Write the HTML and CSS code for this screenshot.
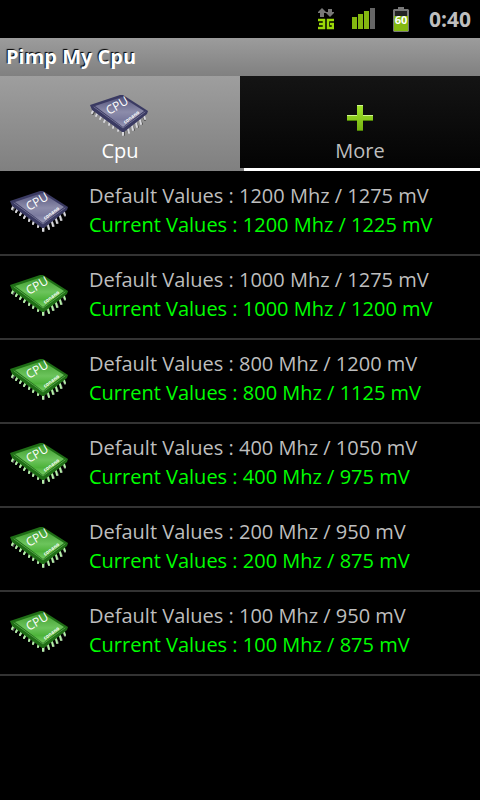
FILE: index.html
```html
<!DOCTYPE html>
<html lang="en">
<head>
<meta charset="utf-8">
<meta name="viewport" content="width=device-width, initial-scale=1">
<title>Pimp My Cpu</title>
<link rel="stylesheet" href="styles.css">
</head>
<body>
<svg class="defs" aria-hidden="true">
  <defs>
    <linearGradient id="face-violet" x1="0" y1="0" x2="0" y2="1"><stop offset="0" stop-color="#54547c"/><stop offset=".5" stop-color="#8c8caa"/><stop offset=".75" stop-color="#7a7a9e"/><stop offset="1" stop-color="#9a9ab8"/></linearGradient>
    <linearGradient id="face-green" x1="0" y1="0" x2="0" y2="1"><stop offset="0" stop-color="#3f9c2e"/><stop offset=".5" stop-color="#6cc45c"/><stop offset=".75" stop-color="#4db33a"/><stop offset="1" stop-color="#74cc62"/></linearGradient>
    <linearGradient id="plus" x1="0" y1="0" x2="0" y2="1"><stop offset="0" stop-color="#a2e62c"/><stop offset="1" stop-color="#74b010"/></linearGradient>
    <symbol id="chip" viewBox="0 0 64 48">
      <path class="pin-shade" d="M7 18l-2 4M10 20l-2 4M14 23l-2 4M18 26l-2 4M23 29l-2 4M27 32l-2 4M31 35l-1 4M36 38v5M39 37l2 4M44 34l2 4M48 31l2 4M52 28l2 4M55 24l2 4"/>
      <path class="pin" d="M6 17l-2 4M10 20l-2 4M14 23l-2 4M18 26l-2 4M22 29l-1 4M26 32l-1 4M31 35l-1 4M35 38v5M40 37l1 4M44 34l1 4M48 31l1 4M52 28l1 4M56 24l1 3"/>
      <path class="chip-edge" d="M2 13L32 3h3L60 19l-1 3L36 40h-2L4 18z"/>
      <path class="chip-face" d="M7 14L34 5 56 19 35 35z"/>
      <path class="chip-rim" d="M6 15L35 36 57 20"/>
      <text class="chip-name" transform="translate(21 23) rotate(-30)">CPU</text>
      <text class="chip-brand" transform="translate(37 32) rotate(-36)">conano</text>
    </symbol>
  </defs>
</svg>

<header class="status">
  <svg class="net" viewBox="0 0 16 22" role="img" aria-label="3G data">
    <path fill="#777" d="M4 0l4 4v1H6v4H2V5H0V4zM12 9l4-4V4h-2V1h-4v3H8v1z"/>
    <path fill="none" stroke="#9bd808" stroke-width="2.5" d="M0 12h6v8H0M1 16h5M16 12H10v8h5v-4h-3"/>
  </svg>
  <svg class="signal" viewBox="0 0 24 22" role="img" aria-label="Signal">
    <path fill="#84b810" d="M0 9h5v12H0zM6 6h5v15H6zM12 3h5v18h-5z"/>
    <path fill="#666" d="M18 0h5v21h-5z"/>
  </svg>
  <svg class="battery" viewBox="0 0 16 25" role="img" aria-label="Battery 60 percent">
    <path fill="#777" d="M5 0h6v2h4l1 1v21l-1 1H1l-1-1V3l1-1h4z"/>
    <path fill="#222" d="M2 4h12v5H2z"/>
    <path fill="#84b810" d="M1 9h14v15H1z"/>
    <text class="battery-level" x="8" y="17">60</text>
  </svg>
  <time class="clock">0:40</time>
</header>

<h1 class="title">Pimp My Cpu</h1>

<nav class="tabs">
  <button class="tab tab-active" type="button"><svg class="chip violet"><use href="#chip"/></svg><span>Cpu</span></button>
  <button class="tab" type="button">
    <svg class="plus" viewBox="0 0 26 26"><path fill="url(#plus)" d="M10 0h6v10h10v6H16v10h-6V16H0v-6h10z"/><path fill="#d0f68c" d="M10 0h6v1h-6zM0 10h10v1H0zM16 10h10v1H16z"/><path fill="#4f8206" d="M10 25h6v1h-6zM0 15h10v1H0zM16 15h10v1H16z"/></svg><span>More</span></button>
</nav>

<main>
  <ul class="list">
    <li class="row"><svg class="chip violet"><use href="#chip"/></svg><div class="values"><p>Default Values : 1200 Mhz / 1275 mV</p><p class="current">Current Values : 1200 Mhz / 1225 mV</p></div></li>
    <li class="row"><svg class="chip green"><use href="#chip"/></svg><div class="values"><p>Default Values : 1000 Mhz / 1275 mV</p><p class="current">Current Values : 1000 Mhz / 1200 mV</p></div></li>
    <li class="row"><svg class="chip green"><use href="#chip"/></svg><div class="values"><p>Default Values : 800 Mhz / 1200 mV</p><p class="current">Current Values : 800 Mhz / 1125 mV</p></div></li>
    <li class="row"><svg class="chip green"><use href="#chip"/></svg><div class="values"><p>Default Values : 400 Mhz / 1050 mV</p><p class="current">Current Values : 400 Mhz / 975 mV</p></div></li>
    <li class="row"><svg class="chip green"><use href="#chip"/></svg><div class="values"><p>Default Values : 200 Mhz / 950 mV</p><p class="current">Current Values : 200 Mhz / 875 mV</p></div></li>
    <li class="row"><svg class="chip green"><use href="#chip"/></svg><div class="values"><p>Default Values : 100 Mhz / 950 mV</p><p class="current">Current Values : 100 Mhz / 875 mV</p></div></li>
  </ul>
</main>
</body>
</html>
```

FILE: styles.css
```css
* { box-sizing: border-box; }
body {
  margin: 0;
  min-height: 100vh;
  background: #000;
  color: #bebebe;
  font: 20px/29px "Open Sans", "Noto Sans", sans-serif;
}
h1, p, ul { margin: 0; padding: 0; }
.defs { position: absolute; width: 0; height: 0; }

.status {
  display: flex;
  align-items: center;
  justify-content: flex-end;
  height: 38px;
  padding-right: 9px;
}
.net { width: 16px; height: 22px; margin-right: 18px; }
.signal { width: 24px; height: 22px; margin-right: 17px; }
.battery { width: 16px; height: 25px; margin-right: 20px; }
.battery-level { fill: #fff; font-size: 11px; font-weight: 700; text-anchor: middle; }
.clock { font-size: 21px; font-weight: 700; }

.title {
  height: 38px;
  padding: 0 6px;
  background: linear-gradient(#9c9c9c, #808080);
  color: #fff;
  font-size: 20px;
  line-height: 37px;
  text-shadow: -1px -1px 1px #000;
}

.tabs { display: flex; }
.tab {
  flex: 1;
  display: flex;
  flex-direction: column;
  align-items: center;
  justify-content: flex-end;
  height: 95px;
  margin: 0;
  padding: 0 0 6px;
  border: 0;
  background: linear-gradient(90deg, #808080 4px, #fff 4px) bottom / 100% 3px no-repeat, linear-gradient(#141414, #030303);
  color: #bebebe;
  font: inherit;
}
.tab-active {
  background: linear-gradient(#9e9e9e, #808080);
  color: #fff;
}
.plus { width: 26px; height: 26px; margin-bottom: 5px; }
.tab .chip { margin-bottom: -4px; }

.chip { display: block; flex: none; width: 64px; height: 48px; stroke-linecap: round; }
.violet { --face: url(#face-violet); --edge: #3a3a62; --rim: #a4a4c0; --pin: #d8d8dc; }
.green { --face: url(#face-green); --edge: #1f6e16; --rim: #86d876; --pin: #b4f0a8; }
.chip-face { fill: var(--face); }
.chip-edge { fill: var(--edge); }
.chip-rim { fill: none; stroke: var(--rim); stroke-width: 1; opacity: 0.5; }
.pin { fill: none; stroke: var(--pin); stroke-width: 2; }
.pin-shade { fill: none; stroke: #555; stroke-width: 2; }
.chip-name { fill: #fff; font-size: 12px; }
.chip-brand { fill: #fff; font-size: 5px; font-weight: 700; }

.list { padding-top: 1px; list-style: none; }
.row {
  display: flex;
  align-items: center;
  gap: 17px;
  height: 84px;
  padding: 0 8px 2px;
  border-bottom: 2px solid #333;
  white-space: nowrap;
}
.values { margin-bottom: 4px; }
.current { color: #0f0; }
```
